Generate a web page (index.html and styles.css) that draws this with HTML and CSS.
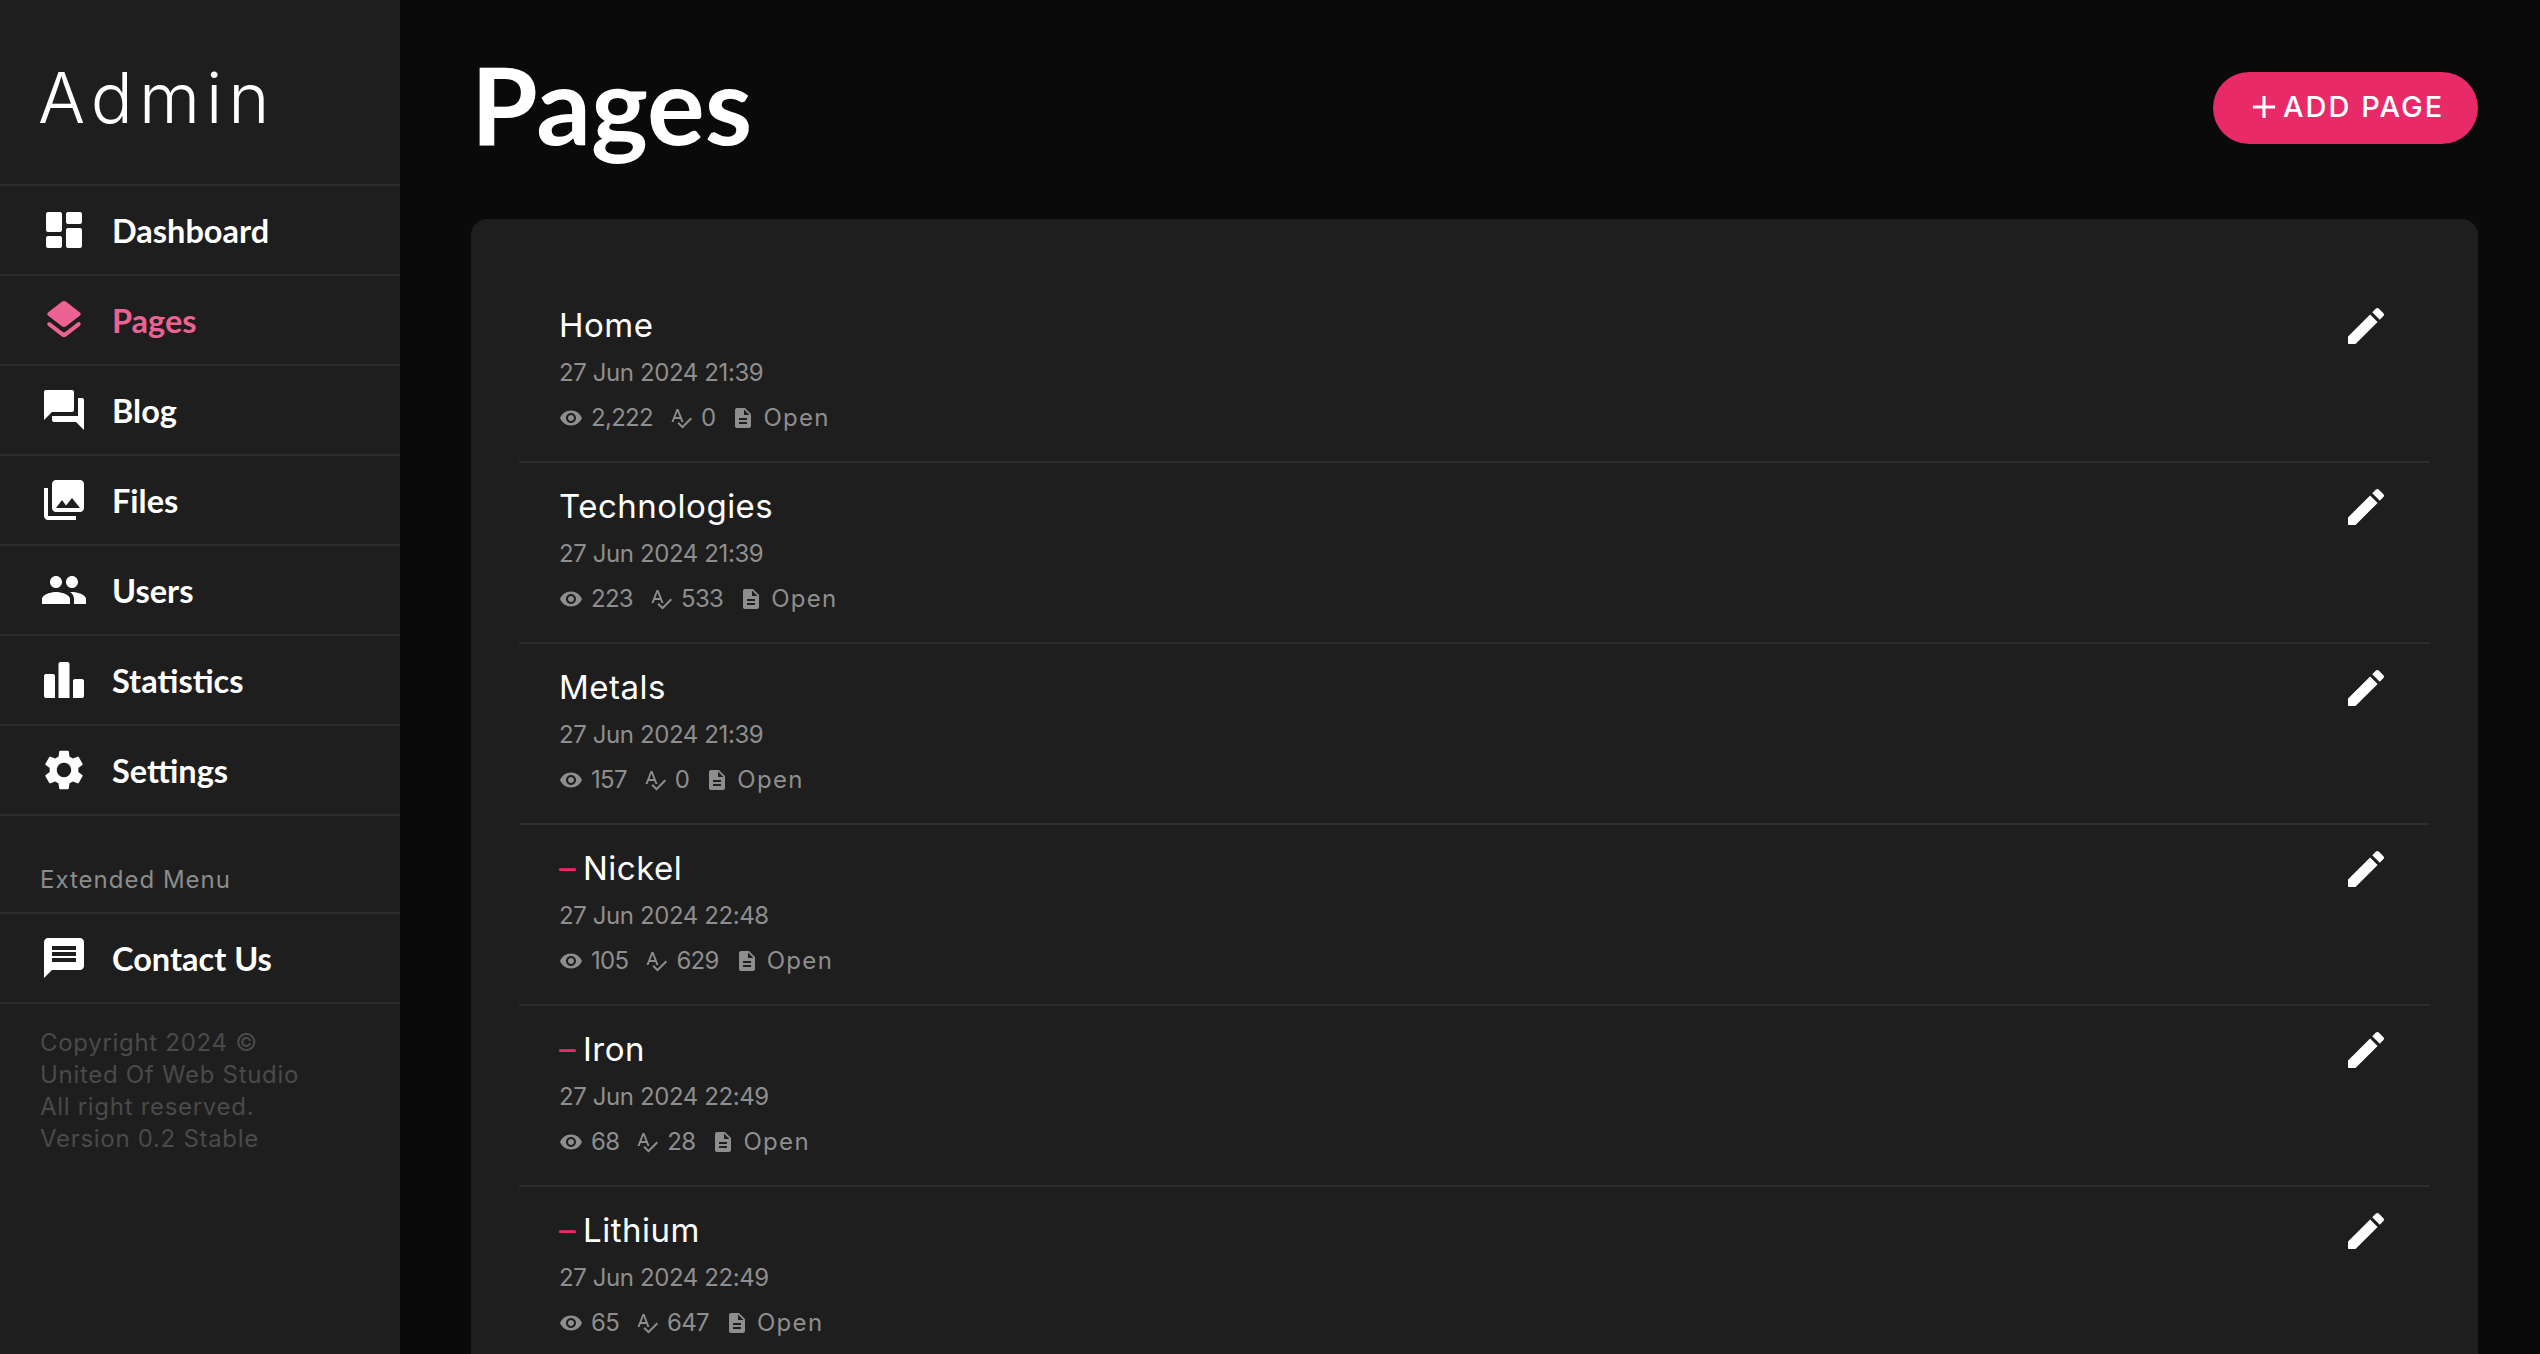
FILE: index.html
```html
<!DOCTYPE html>
<html lang="en">
<head>
<meta charset="utf-8">
<title>Pages</title>
<link rel="stylesheet" href="styles.css">
</head>
<body>
<svg class="sprite" xmlns="http://www.w3.org/2000/svg">
<symbol id="i-dashboard" viewBox="0 0 24 24"><path d="M4 13h6c.55 0 1-.45 1-1V4c0-.55-.45-1-1-1H4c-.55 0-1 .45-1 1v8c0 .55.45 1 1 1zm0 8h6c.55 0 1-.45 1-1v-4c0-.55-.45-1-1-1H4c-.55 0-1 .45-1 1v4c0 .55.45 1 1 1zm10 0h6c.55 0 1-.45 1-1v-8c0-.55-.45-1-1-1h-6c-.55 0-1 .45-1 1v8c0 .55.45 1 1 1zM13 4v4c0 .55.45 1 1 1h6c.55 0 1-.45 1-1V4c0-.55-.45-1-1-1h-6c-.55 0-1 .45-1 1z"/></symbol>
<symbol id="i-layers" viewBox="0 0 24 24"><path d="M12.6 18.06c-.36.28-.87.28-1.23 0l-6.15-4.78c-.36-.28-.85-.28-1.21 0-.51.4-.51 1.17 0 1.57l6.76 5.26c.72.56 1.73.56 2.46 0l6.76-5.26c.51-.4.51-1.17 0-1.57l-.01-.01c-.36-.28-.85-.28-1.21 0l-6.17 4.79zm.63-3.02l6.76-5.26c.51-.4.51-1.18 0-1.58l-6.76-5.26c-.72-.56-1.73-.56-2.46 0L4.01 8.21c-.51.4-.51 1.18 0 1.58l6.76 5.26c.72.56 1.74.56 2.46-.01z"/></symbol>
<symbol id="i-forum" viewBox="0 0 24 24"><path d="M21 6h-2v9H6v2c0 .55.45 1 1 1h11l4 4V7c0-.55-.45-1-1-1zm-4 6V3c0-.55-.45-1-1-1H3c-.55 0-1 .45-1 1v14l4-4h10c.55 0 1-.45 1-1z"/></symbol>
<symbol id="i-media" viewBox="0 0 24 24"><path d="M22 16V4c0-1.1-.9-2-2-2H8c-1.1 0-2 .9-2 2v12c0 1.1.9 2 2 2h12c1.1 0 2-.9 2-2zm-11-4l2.03 2.71L16 11l4 5H8l3-4zM2 6v14c0 1.1.9 2 2 2h14v-2H4V6H2z"/></symbol>
<symbol id="i-people" viewBox="0 0 24 24"><path d="M16 11c1.66 0 2.99-1.34 2.99-3S17.66 5 16 5c-1.66 0-3 1.34-3 3s1.34 3 3 3zm-8 0c1.66 0 2.99-1.34 2.99-3S9.66 5 8 5C6.34 5 5 6.34 5 8s1.34 3 3 3zm0 2c-2.33 0-7 1.17-7 3.5V19h14v-2.5c0-2.33-4.67-3.5-7-3.5zm8 0c-.29 0-.62.02-.97.05 1.16.84 1.97 1.97 1.97 3.45V19h6v-2.5c0-2.33-4.67-3.5-7-3.5z"/></symbol>
<symbol id="i-stats" viewBox="0 0 24 24"><path d="M3 9h3.5c.55 0 1 .45 1 1v11H3c-.55 0-1-.45-1-1V10c0-.55.45-1 1-1zm7.25-6h3.5c.55 0 1 .45 1 1v17h-5.5V4c0-.55.45-1 1-1zM17.5 11.5H21c.55 0 1 .45 1 1V20c0 .55-.45 1-1 1h-4.5v-8.5c0-.55.45-1 1-1z"/></symbol>
<symbol id="i-settings" viewBox="0 0 24 24"><path d="M19.14 12.94c.04-.3.06-.61.06-.94 0-.32-.02-.64-.07-.94l2.03-1.58c.18-.14.23-.41.12-.61l-1.92-3.32c-.12-.22-.37-.29-.59-.22l-2.39.96c-.5-.38-1.03-.7-1.62-.94l-.36-2.54c-.04-.24-.24-.41-.48-.41h-3.84c-.24 0-.43.17-.47.41l-.36 2.54c-.59.24-1.13.57-1.62.94l-2.39-.96c-.22-.08-.47 0-.59.22L2.74 8.87c-.12.21-.08.47.12.61l2.03 1.58c-.05.3-.09.63-.09.94s.02.64.07.94l-2.03 1.58c-.18.14-.23.41-.12.61l1.92 3.32c.12.22.37.29.59.22l2.39-.96c.5.38 1.03.7 1.62.94l.36 2.54c.05.24.24.41.48.41h3.84c.24 0 .44-.17.47-.41l.36-2.54c.59-.24 1.13-.56 1.62-.94l2.39.96c.22.08.47 0 .59-.22l1.92-3.32c.12-.22.07-.47-.12-.61l-2.01-1.58zM12 15.6c-1.98 0-3.6-1.62-3.6-3.6s1.62-3.6 3.6-3.6 3.6 1.62 3.6 3.6-1.62 3.6-3.6 3.6z"/></symbol>
<symbol id="i-message" viewBox="0 0 24 24"><path d="M20 2H4c-1.1 0-1.99.9-1.99 2L2 22l4-4h14c1.1 0 2-.9 2-2V4c0-1.1-.9-2-2-2zm-2 12H6v-2h12v2zm0-3H6V9h12v2zm0-3H6V6h12v2z"/></symbol>
<symbol id="i-edit" viewBox="0 0 24 24"><path d="M3 17.46v3.04c0 .28.22.5.5.5h3.04c.13 0 .26-.05.35-.15L17.81 9.94l-3.75-3.75L3.15 17.1c-.1.1-.15.22-.15.36zM20.71 7.04c.39-.39.39-1.02 0-1.41l-2.34-2.34c-.39-.39-1.02-.39-1.41 0l-1.83 1.83 3.75 3.75 1.83-1.83z"/></symbol>
<symbol id="i-eye" viewBox="0 0 24 24"><path d="M12 4.5C7 4.5 2.73 7.61 1 12c1.73 4.39 6 7.5 11 7.5s9.27-3.11 11-7.5c-1.73-4.39-6-7.5-11-7.5zM12 17c-2.76 0-5-2.24-5-5s2.24-5 5-5 5 2.24 5 5-2.24 5-5 5zm0-8c-1.66 0-3 1.34-3 3s1.34 3 3 3 3-1.34 3-3-1.34-3-3-3z"/></symbol>
<symbol id="i-spell" viewBox="0 0 24 24"><path d="M12.45 16h2.09L9.43 3H7.57L2.46 16h2.09l1.12-3h5.64l1.14 3zm-6.02-5L8.5 5.48 10.57 11H6.43zm15.16.59l-8.09 8.09L9.83 16l-1.41 1.41 5.09 5.09L23 13l-1.41-1.41z"/></symbol>
<symbol id="i-doc" viewBox="0 0 24 24"><path d="M14 2H6c-1.1 0-1.99.9-1.99 2L4 20c0 1.1.89 2 1.99 2H18c1.1 0 2-.9 2-2V8l-6-6zm2 16H8v-2h8v2zm0-4H8v-2h8v2zm-3-5V3.5L18.5 9H13z"/></symbol>
<symbol id="i-add" viewBox="0 0 24 24"><path d="M19 13h-6v6h-2v-6H5v-2h6V5h2v6h6v2z"/></symbol>
</svg>
<div class="app">
  <aside class="sidebar">
    <div class="logo">Admin</div>
    <nav class="nav">
      <a class="nav-item"><svg class="nav-icon"><use href="#i-dashboard"/></svg><span class="nav-label">Dashboard</span></a>
      <a class="nav-item is-active"><svg class="nav-icon"><use href="#i-layers"/></svg><span class="nav-label">Pages</span></a>
      <a class="nav-item"><svg class="nav-icon"><use href="#i-forum"/></svg><span class="nav-label">Blog</span></a>
      <a class="nav-item"><svg class="nav-icon"><use href="#i-media"/></svg><span class="nav-label">Files</span></a>
      <a class="nav-item"><svg class="nav-icon"><use href="#i-people"/></svg><span class="nav-label">Users</span></a>
      <a class="nav-item"><svg class="nav-icon"><use href="#i-stats"/></svg><span class="nav-label">Statistics</span></a>
      <a class="nav-item"><svg class="nav-icon"><use href="#i-settings"/></svg><span class="nav-label">Settings</span></a>
    </nav>
    <div class="nav-heading">Extended Menu</div>
    <nav class="nav">
      <a class="nav-item"><svg class="nav-icon"><use href="#i-message"/></svg><span class="nav-label">Contact Us</span></a>
    </nav>
    <p class="copyright">Copyright 2024 ©<br>United Of Web Studio<br>All right reserved.<br>Version 0.2 Stable</p>
  </aside>
  <main class="main">
    <header class="page-head">
      <h1 class="page-title">Pages</h1>
      <a class="btn-add"><svg class="btn-icon"><use href="#i-add"/></svg><span>ADD PAGE</span></a>
    </header>
    <section class="card">
      <article class="row">
        <div class="row-body">
          <div class="row-title">Home</div>
          <div class="row-date">27 Jun 2024 21:39</div>
          <div class="row-meta">
            <span class="stat"><svg class="stat-icon"><use href="#i-eye"/></svg>2,222</span>
            <span class="stat"><svg class="stat-icon"><use href="#i-spell"/></svg>0</span>
            <span class="stat stat-status"><svg class="stat-icon"><use href="#i-doc"/></svg>Open</span>
          </div>
        </div>
        <svg class="edit"><use href="#i-edit"/></svg>
      </article>
      <article class="row">
        <div class="row-body">
          <div class="row-title">Technologies</div>
          <div class="row-date">27 Jun 2024 21:39</div>
          <div class="row-meta">
            <span class="stat"><svg class="stat-icon"><use href="#i-eye"/></svg>223</span>
            <span class="stat"><svg class="stat-icon"><use href="#i-spell"/></svg>533</span>
            <span class="stat stat-status"><svg class="stat-icon"><use href="#i-doc"/></svg>Open</span>
          </div>
        </div>
        <svg class="edit"><use href="#i-edit"/></svg>
      </article>
      <article class="row">
        <div class="row-body">
          <div class="row-title">Metals</div>
          <div class="row-date">27 Jun 2024 21:39</div>
          <div class="row-meta">
            <span class="stat"><svg class="stat-icon"><use href="#i-eye"/></svg>157</span>
            <span class="stat"><svg class="stat-icon"><use href="#i-spell"/></svg>0</span>
            <span class="stat stat-status"><svg class="stat-icon"><use href="#i-doc"/></svg>Open</span>
          </div>
        </div>
        <svg class="edit"><use href="#i-edit"/></svg>
      </article>
      <article class="row">
        <div class="row-body">
          <div class="row-title"><span class="dash">–</span>Nickel</div>
          <div class="row-date">27 Jun 2024 22:48</div>
          <div class="row-meta">
            <span class="stat"><svg class="stat-icon"><use href="#i-eye"/></svg>105</span>
            <span class="stat"><svg class="stat-icon"><use href="#i-spell"/></svg>629</span>
            <span class="stat stat-status"><svg class="stat-icon"><use href="#i-doc"/></svg>Open</span>
          </div>
        </div>
        <svg class="edit"><use href="#i-edit"/></svg>
      </article>
      <article class="row">
        <div class="row-body">
          <div class="row-title"><span class="dash">–</span>Iron</div>
          <div class="row-date">27 Jun 2024 22:49</div>
          <div class="row-meta">
            <span class="stat"><svg class="stat-icon"><use href="#i-eye"/></svg>68</span>
            <span class="stat"><svg class="stat-icon"><use href="#i-spell"/></svg>28</span>
            <span class="stat stat-status"><svg class="stat-icon"><use href="#i-doc"/></svg>Open</span>
          </div>
        </div>
        <svg class="edit"><use href="#i-edit"/></svg>
      </article>
      <article class="row">
        <div class="row-body">
          <div class="row-title"><span class="dash">–</span>Lithium</div>
          <div class="row-date">27 Jun 2024 22:49</div>
          <div class="row-meta">
            <span class="stat"><svg class="stat-icon"><use href="#i-eye"/></svg>65</span>
            <span class="stat"><svg class="stat-icon"><use href="#i-spell"/></svg>647</span>
            <span class="stat stat-status"><svg class="stat-icon"><use href="#i-doc"/></svg>Open</span>
          </div>
        </div>
        <svg class="edit"><use href="#i-edit"/></svg>
      </article>
    </section>
  </main>
</div>
</body>
</html>
```

FILE: styles.css
```css
* { box-sizing: border-box; }
html, body { margin: 0; height: 100%; overflow: hidden; }
body { background: #0a0a0a; color: #fff; font-family: Inter, "Liberation Sans", sans-serif; }
.sprite { display: none; }
svg { fill: currentColor; flex: none; }

.app { display: flex; height: 100vh; }

.sidebar { width: 400px; flex: none; background: #1e1e1e; }
.logo { height: 184px; padding: 48px 38px 0; font: 300 70px/100px Inter, sans-serif; letter-spacing: 6px; }

.nav { border-top: 2px solid #2c2c2c; }
.nav-item { display: flex; align-items: center; gap: 24px; height: 90px; padding-left: 40px; border-bottom: 2px solid #2c2c2c; font: 700 32.5px/40px Lato, sans-serif; color: #fff; }
.nav-item.is-active { color: #ec6292; }
.nav-icon { width: 48px; height: 48px; }
.nav-label { padding-top: 2px; }

.nav-heading { height: 96px; padding: 48px 40px 0; font-size: 24px; line-height: 32px; letter-spacing: 1px; color: #8c8c8c; }
.copyright { margin: 0; padding: 23px 40px 0; font-size: 24px; line-height: 32px; letter-spacing: .7px; color: #4a4a4a; }

.main { flex: 1; min-width: 0; padding: 0 62px 0 71px; }
.page-head { display: flex; justify-content: space-between; align-items: center; height: 219px; padding-bottom: 3px; }
.page-title { margin: 0 0 10px; font: 700 108px/130px Lato, sans-serif; color: #fff; }
.btn-add { display: flex; align-items: center; height: 72px; width: 265px; padding: 0 0 3px 32px; border-radius: 36px; background: #e92a68; font-size: 29px; font-weight: 500; letter-spacing: 2px; color: #fff; }
.btn-icon { width: 38px; height: 38px; }

.card { background: #1e1e1e; border-radius: 16px; padding: 63px 48px; }
.row { display: flex; justify-content: space-between; height: 181px; padding: 20px 40px 0; border-bottom: 2px solid #2c2c2c; }
.row-body { padding-top: 4px; }
.row-title { font-size: 33px; line-height: 38px; letter-spacing: .5px; color: #fff; }
.dash { color: #e92a68; margin-right: 7px; }
.row-date { margin-top: 11px; font-size: 24px; line-height: 36px; letter-spacing: -.4px; color: #8e8e8e; }
.row-meta { display: flex; gap: 16px; margin-top: 9px; font-size: 24px; line-height: 36px; letter-spacing: -.7px; color: #8e8e8e; }
.stat { display: flex; align-items: center; gap: 8px; }
.stat-status { letter-spacing: 1.3px; }
.stat-icon { width: 24px; height: 24px; }
.edit { width: 48px; height: 48px; }
```
